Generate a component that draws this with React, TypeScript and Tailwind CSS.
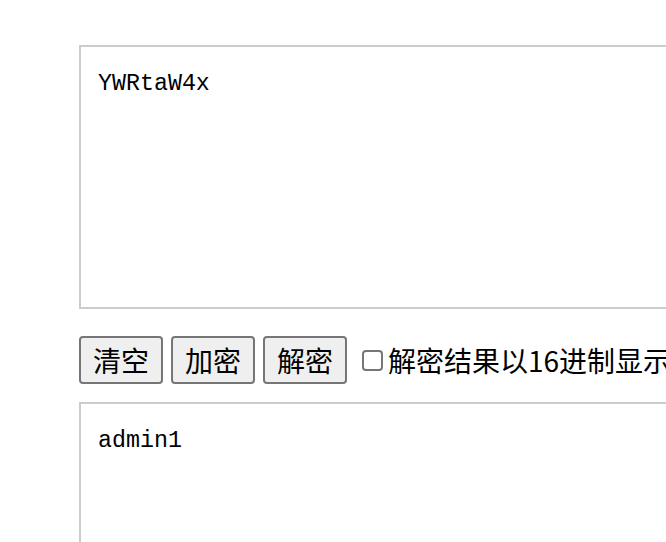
import React from "react";

export default function App() {
  return (
    <div className="w-[666px] h-[542px] overflow-hidden bg-white pl-[79px] pt-[45px]">
      <textarea
        readOnly
        value="YWRtaW4x"
        className="block w-[700px] h-[264px] border-2 border-[#cccccc] bg-white px-[17px] py-[24px] text-[23.3px] leading-[26px] text-black resize-none outline-none"
        style={{ fontFamily: '"Liberation Mono", monospace' }}
      />
      <div className="flex items-center mt-[27px] h-[48px] whitespace-nowrap" style={{ fontFamily: '"Noto Sans CJK SC", sans-serif' }}>
        <button className="w-[84px] h-[48px] shrink-0 border-2 border-[#767676] rounded-[4px] bg-[#efefef] text-[28px] leading-none text-black flex items-center justify-center">清空</button>
        <button className="ml-[8px] w-[84px] h-[48px] shrink-0 border-2 border-[#767676] rounded-[4px] bg-[#efefef] text-[28px] leading-none text-black flex items-center justify-center">加密</button>
        <button className="ml-[8px] w-[84px] h-[48px] shrink-0 border-2 border-[#767676] rounded-[4px] bg-[#efefef] text-[28px] leading-none text-black flex items-center justify-center">解密</button>
        <span className="ml-[15px] w-[21px] h-[21px] shrink-0 border-2 border-[#767676] rounded-[4px] bg-white"></span>
        <span className="ml-[5px] text-[28px] leading-none text-black">解密结果以16进制显示</span>
      </div>
      <textarea
        readOnly
        value="admin1"
        className="block mt-[18px] w-[700px] h-[264px] border-2 border-[#cccccc] bg-white px-[17px] py-[24px] text-[23.3px] leading-[26px] text-black resize-none outline-none"
        style={{ fontFamily: '"Liberation Mono", monospace' }}
      />
    </div>
  );
}
